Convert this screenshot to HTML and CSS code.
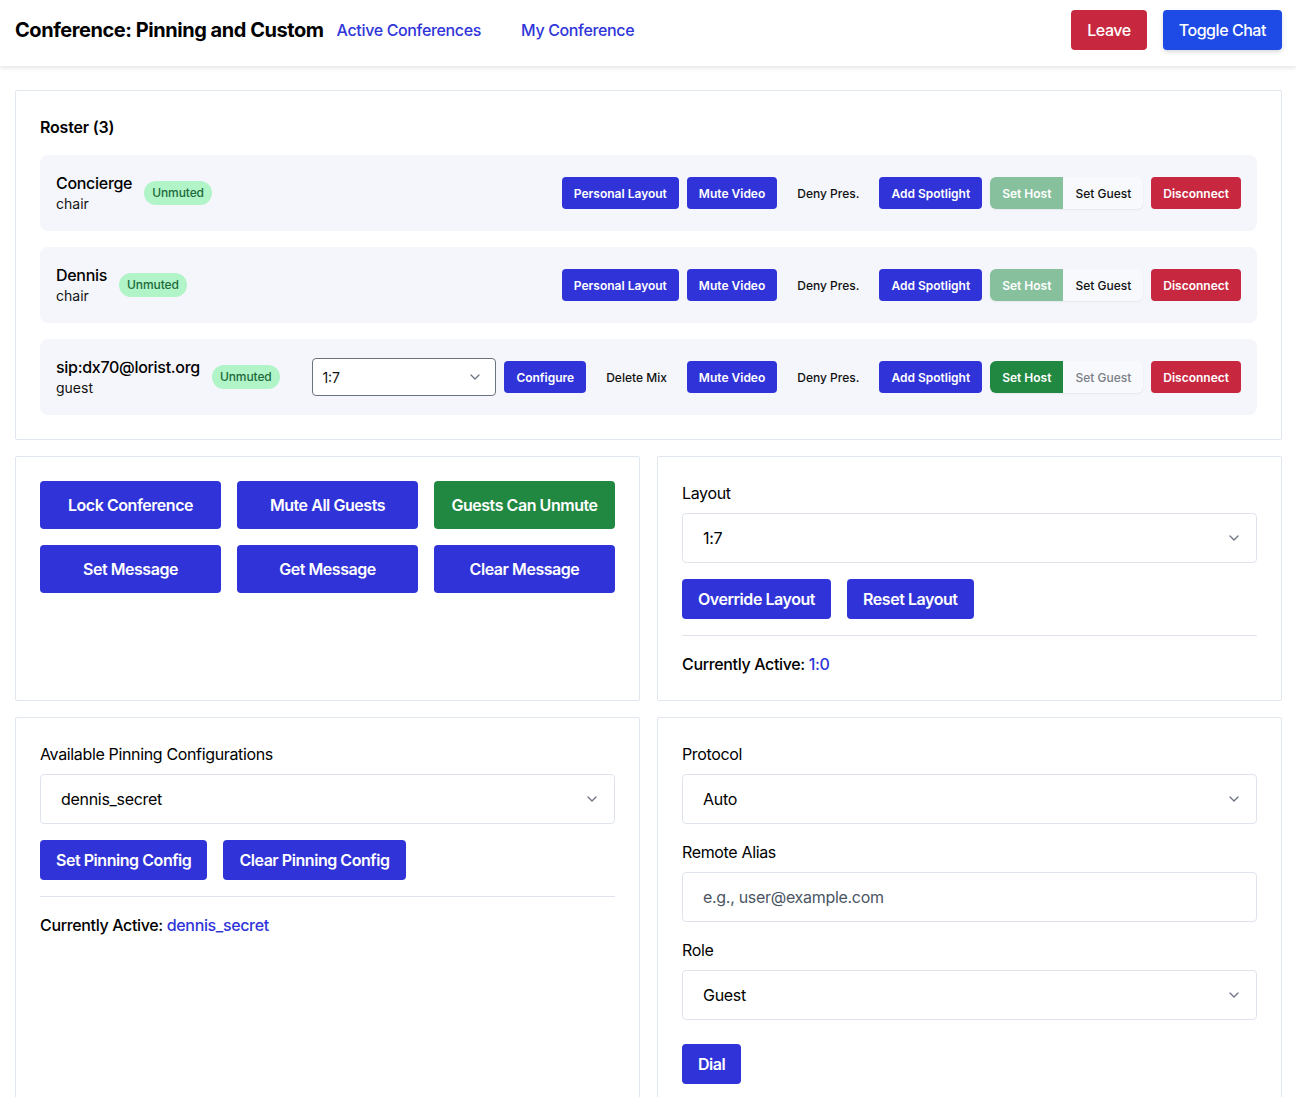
FILE: index.html
```html
<!DOCTYPE html>
<html>
<head>
<meta charset="utf-8">
<link rel="stylesheet" href="styles.css">
</head>
<body>
<header class="topbar">
  <div class="topbar-left">
    <h1 class="title">Conference: Pinning and Custom</h1>
    <nav class="nav">
      <a class="nav-link">Active Conferences</a>
      <a class="nav-link">My Conference</a>
    </nav>
  </div>
  <div class="topbar-right">
    <button class="hbtn hbtn-red">Leave</button>
    <button class="hbtn hbtn-blue">Toggle Chat</button>
  </div>
</header>

<main class="page">
  <section class="panel roster">
    <h2 class="roster-title">Roster (3)</h2>
    <div class="rows">
      <div class="row">
        <div class="who">
          <div class="names"><div class="name">Concierge</div><div class="role">chair</div></div>
          <span class="badge">Unmuted</span>
        </div>
        <div class="actions">
          <button class="sbtn blue">Personal Layout</button>
          <button class="sbtn blue">Mute Video</button>
          <button class="sbtn plain">Deny Pres.</button>
          <button class="sbtn blue">Add Spotlight</button>
          <div class="seg"><button class="sbtn green-light">Set Host</button><button class="sbtn plain">Set Guest</button></div>
          <button class="sbtn red">Disconnect</button>
        </div>
      </div>
      <div class="row">
        <div class="who">
          <div class="names"><div class="name">Dennis</div><div class="role">chair</div></div>
          <span class="badge">Unmuted</span>
        </div>
        <div class="actions">
          <button class="sbtn blue">Personal Layout</button>
          <button class="sbtn blue">Mute Video</button>
          <button class="sbtn plain">Deny Pres.</button>
          <button class="sbtn blue">Add Spotlight</button>
          <div class="seg"><button class="sbtn green-light">Set Host</button><button class="sbtn plain">Set Guest</button></div>
          <button class="sbtn red">Disconnect</button>
        </div>
      </div>
      <div class="row">
        <div class="who">
          <div class="names"><div class="name">sip:dx70@lorist.org</div><div class="role">guest</div></div>
          <span class="badge">Unmuted</span>
        </div>
        <div class="actions">
          <div class="mini-select"><span>1:7</span><svg width="16" height="16" viewBox="0 0 20 20"><path d="M5 7.5l5 5 5-5" fill="none" stroke="#6b7280" stroke-width="1.6" stroke-linecap="round" stroke-linejoin="round"/></svg></div>
          <button class="sbtn blue">Configure</button>
          <button class="sbtn plain">Delete Mix</button>
          <button class="sbtn blue">Mute Video</button>
          <button class="sbtn plain">Deny Pres.</button>
          <button class="sbtn blue">Add Spotlight</button>
          <div class="seg"><button class="sbtn green">Set Host</button><button class="sbtn plain muted">Set Guest</button></div>
          <button class="sbtn red">Disconnect</button>
        </div>
      </div>
    </div>
  </section>

  <div class="grid2">
    <section class="panel">
      <div class="btn-grid">
        <button class="lbtn blue">Lock Conference</button>
        <button class="lbtn blue">Mute All Guests</button>
        <button class="lbtn green">Guests Can Unmute</button>
        <button class="lbtn blue">Set Message</button>
        <button class="lbtn blue">Get Message</button>
        <button class="lbtn blue">Clear Message</button>
      </div>
    </section>
    <section class="panel">
      <label class="label">Layout</label>
      <div class="select"><span>1:7</span><svg width="16" height="16" viewBox="0 0 20 20"><path d="M5 7.5l5 5 5-5" fill="none" stroke="#6b7280" stroke-width="1.6" stroke-linecap="round" stroke-linejoin="round"/></svg></div>
      <div class="btn-row">
        <button class="mbtn">Override Layout</button>
        <button class="mbtn">Reset Layout</button>
      </div>
      <hr class="divider">
      <p class="active">Currently Active: <span class="active-val">1:0</span></p>
    </section>
  </div>

  <div class="grid2 last">
    <section class="panel">
      <label class="label">Available Pinning Configurations</label>
      <div class="select"><span>dennis_secret</span><svg width="16" height="16" viewBox="0 0 20 20"><path d="M5 7.5l5 5 5-5" fill="none" stroke="#6b7280" stroke-width="1.6" stroke-linecap="round" stroke-linejoin="round"/></svg></div>
      <div class="btn-row">
        <button class="mbtn">Set Pinning Config</button>
        <button class="mbtn">Clear Pinning Config</button>
      </div>
      <hr class="divider">
      <p class="active">Currently Active: <span class="active-val">dennis_secret</span></p>
    </section>
    <section class="panel">
      <label class="label">Protocol</label>
      <div class="select"><span>Auto</span><svg width="16" height="16" viewBox="0 0 20 20"><path d="M5 7.5l5 5 5-5" fill="none" stroke="#6b7280" stroke-width="1.6" stroke-linecap="round" stroke-linejoin="round"/></svg></div>
      <label class="label">Remote Alias</label>
      <div class="select input"><span class="ph">e.g., user@example.com</span></div>
      <label class="label">Role</label>
      <div class="select"><span>Guest</span><svg width="16" height="16" viewBox="0 0 20 20"><path d="M5 7.5l5 5 5-5" fill="none" stroke="#6b7280" stroke-width="1.6" stroke-linecap="round" stroke-linejoin="round"/></svg></div>
      <div class="btn-row dial-row">
        <button class="mbtn">Dial</button>
      </div>
    </section>
  </div>
</main>
</body>
</html>
```

FILE: styles.css
```css
* { box-sizing: border-box; }
html, body { margin: 0; padding: 0; }
body {
  font-family: Inter, "Noto Sans", sans-serif;
  color: #111;
  background: #fff;
}
button { font-family: inherit; border: 0; cursor: pointer; }

.topbar {
  height: 66px;
  display: flex;
  align-items: flex-start;
  justify-content: space-between;
  padding: 10px 14px 0 15px;
  background: #fff;
  box-shadow: 0 2px 4px rgba(0,0,0,0.10);
  position: relative;
  z-index: 1;
}
.topbar-left { display: flex; align-items: center; height: 40px; }
.title { font-size: 20px; font-weight: 700; margin: 0 13px 0 0; letter-spacing: -0.45px; color: #000; }
.nav { display: flex; gap: 40px; }
.nav-link { color: #2f35d9; font-size: 16px; font-weight: 500; letter-spacing: -0.35px; }
.topbar-right { display: flex; gap: 16px; }
.hbtn {
  height: 40px;
  padding: 0 16px;
  color: #fff;
  font-size: 16px;
  font-weight: 500;
  border-radius: 4px;
  letter-spacing: -0.45px;
}
.hbtn-red { background: #c8283f; }
.hbtn-blue { background: #1e4ae6; box-shadow: 0 2px 4px rgba(0,0,0,0.15); }

.page { padding: 24px 14px 0 15px; }
.panel {
  border: 1px solid #e1e7ef;
  border-radius: 2px;
  padding: 24px;
  background: #fff;
}
.roster { padding-top: 26px; padding-bottom: 24px; }
.roster-title { font-size: 16px; font-weight: 600; margin: 0 0 18px 0; color: #000; letter-spacing: -0.2px; }
.rows { display: flex; flex-direction: column; gap: 16px; }
.row {
  background: #f5f6fb;
  border-radius: 8px;
  height: 76px;
  padding: 0 16px;
  display: flex;
  align-items: center;
  justify-content: space-between;
}
.who { display: flex; align-items: center; gap: 12px; }
.names { display: flex; flex-direction: column; }
.name { font-size: 16px; font-weight: 500; color: #000; line-height: 22px; letter-spacing: -0.3px; }
.role { font-size: 14px; color: #111; line-height: 20px; }
.badge {
  background: #b0f4c8;
  color: #1d6a3a;
  font-size: 12px;
  border-radius: 12px;
  height: 24px;
  line-height: 24px;
  padding: 0 8px;
  font-weight: 500;
  letter-spacing: -0.1px;
}
.actions { display: flex; align-items: center; gap: 8px; }
.sbtn {
  height: 32px;
  padding: 0 12px;
  font-size: 12px;
  font-weight: 600;
  border-radius: 4px;
  color: #fff;
  background: transparent;
  white-space: nowrap;
  letter-spacing: 0;
}
.sbtn.blue { background: #3033d8; }
.sbtn.red { background: #c8283f; }
.sbtn.green { background: #218842; }
.sbtn.green-light { background: #87c09d; }
.sbtn.plain { color: #111; font-weight: 500; }
.sbtn.muted { color: #7b7f88; }
.seg {
  display: flex;
  border-radius: 6px;
  background: #f8f9fc;
  box-shadow: 0 1px 2px rgba(0,0,0,0.06);
}
.seg .sbtn { border-radius: 0; }
.seg .sbtn:first-child { border-radius: 6px 0 0 6px; }
.seg .sbtn:last-child { border-radius: 0 6px 6px 0; }
.mini-select {
  width: 184px;
  height: 38px;
  border: 1px solid #6b7280;
  border-radius: 4px;
  background: #fff;
  display: flex;
  align-items: center;
  justify-content: space-between;
  padding: 0 12px 0 9px;
  font-size: 14px;
  color: #111;
}

.grid2 {
  display: grid;
  grid-template-columns: 1fr 1fr;
  gap: 17px;
  margin-top: 16px;
}
.grid2.last .panel { min-height: 400px; }
.btn-grid {
  display: grid;
  grid-template-columns: repeat(3, 1fr);
  gap: 16px;
}
.lbtn {
  height: 48px;
  color: #fff;
  font-size: 16px;
  font-weight: 600;
  border-radius: 4px;
  letter-spacing: -0.45px;
}
.lbtn.blue { background: #3033d8; }
.lbtn.green { background: #218842; }

.label {
  display: block;
  font-size: 16px;
  color: #000;
  margin: 0 0 8px 0;
  line-height: 24px;
  letter-spacing: -0.35px;
}
.select {
  height: 50px;
  border: 1px solid #dfe4ec;
  border-radius: 4px;
  display: flex;
  align-items: center;
  justify-content: space-between;
  padding: 0 14px 0 20px;
  font-size: 16px;
  color: #000;
  margin-bottom: 16px;
  letter-spacing: -0.3px;
}
.ph { color: #4b5563; }
.btn-row { display: flex; gap: 16px; }
.dial-row { margin-top: 24px; }
.mbtn {
  height: 40px;
  padding: 0 16px;
  background: #3033d8;
  color: #fff;
  font-size: 16px;
  font-weight: 600;
  border-radius: 4px;
  letter-spacing: -0.45px;
}
.divider { border: 0; border-top: 1px solid #dfe4ec; margin: 16px 0 0 0; }
.active { margin: 16px 0 0 0; font-size: 16px; font-weight: 500; color: #000; letter-spacing: -0.35px; line-height: 24px; }
.active-val { color: #2f35d9; }
```
